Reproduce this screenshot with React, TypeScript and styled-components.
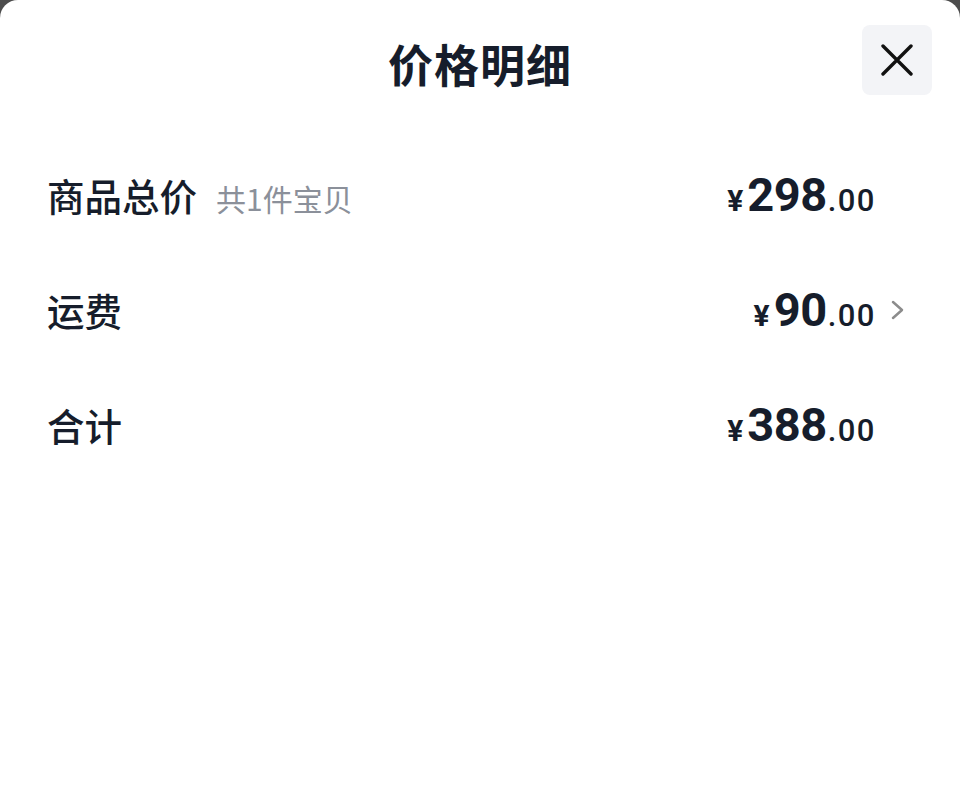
import styled, { createGlobalStyle } from 'styled-components'

const GlobalStyle = createGlobalStyle`
  html, body {
    margin: 0;
    padding: 0;
    background: #4d4d4d;
  }
  * {
    box-sizing: border-box;
  }
`

const Sheet = styled.div`
  width: 960px;
  height: 797px;
  background: #fff;
  border-radius: 18px 18px 0 0;
  font-family: 'Noto Sans CJK SC', 'Noto Sans', sans-serif;
  color: #161d2b;
  overflow: hidden;
`

const Header = styled.div`
  position: relative;
  height: 137px;
  display: flex;
  justify-content: center;
  padding-top: 32px;
`

const Title = styled.h1`
  margin: 0;
  font-size: 45px;
  line-height: 64px;
  font-weight: 700;
  letter-spacing: 1px;
`

const Close = styled.button`
  position: absolute;
  top: 25px;
  right: 28px;
  width: 70px;
  height: 70px;
  border: none;
  border-radius: 8px;
  background: #f3f4f7;
  display: flex;
  align-items: center;
  justify-content: center;
  padding: 0;
`

const Row = styled.div`
  height: 115px;
  display: flex;
  align-items: center;
  padding: 0 54px 0 47px;
`

const Label = styled.div`
  display: flex;
  align-items: baseline;
  gap: 19px;
  flex: 1;
  font-size: 37.5px;
  font-weight: 500;
`

const Hint = styled.span`
  font-size: 30px;
  font-weight: 400;
  color: #8b909a;
`

const Price = styled.div`
  display: flex;
  align-items: baseline;
  font-family: Roboto, 'Liberation Sans', sans-serif;
  font-weight: 700;
  color: #161d2b;
`

const Yen = styled.span`
  font-size: 30px;
  margin-right: 4px;
`

const Int = styled.span`
  font-size: 47px;
  letter-spacing: -0.5px;
`

const Dec = styled.span`
  font-size: 31px;
  font-weight: 500;
  letter-spacing: 1.5px;
  margin-left: 1px;
`

const Slot = styled.div`
  width: 30px;
  display: flex;
  justify-content: flex-end;
`

const rows = [
  { label: '商品总价', hint: '共1件宝贝', int: '298', dec: '.00', more: false },
  { label: '运费', hint: '', int: '90', dec: '.00', more: true },
  { label: '合计', hint: '', int: '388', dec: '.00', more: false },
]

const App = () => {
  return (
    <>
      <GlobalStyle />
      <Sheet>
        <Header>
          <Title>价格明细</Title>
          <Close aria-label="关闭">
            <svg width="32" height="32" viewBox="0 0 32 32">
              <path d="M2 2 L30 30 M30 2 L2 30" stroke="#111" strokeWidth="3.4" strokeLinecap="round" fill="none" />
            </svg>
          </Close>
        </Header>
        {rows.map((r) => (
          <Row key={r.label}>
            <Label>
              {r.label}
              {r.hint && <Hint>{r.hint}</Hint>}
            </Label>
            <Price>
              <Yen>¥</Yen>
              <Int>{r.int}</Int>
              <Dec>{r.dec}</Dec>
            </Price>
            <Slot>
              {r.more && (
                <svg width="16" height="20" viewBox="0 0 16 20">
                  <path d="M3 2 L12 10 L3 18" stroke="#8c8c8c" strokeWidth="2.5" fill="none" strokeLinecap="round" strokeLinejoin="round" />
                </svg>
              )}
            </Slot>
          </Row>
        ))}
      </Sheet>
    </>
  )
}

export default App
